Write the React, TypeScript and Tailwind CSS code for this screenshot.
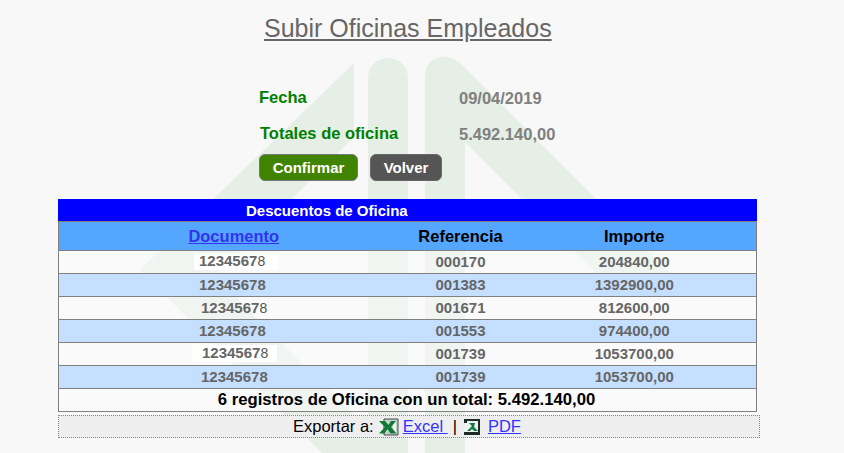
const rows = [
  { ref: "000170", imp: "204840,00", kind: "patch", left: "" },
  { ref: "001383", imp: "1392900,00", kind: "blue", left: "pl-[140px]" },
  { ref: "001671", imp: "812600,00", kind: "plain", left: "pl-[142px]" },
  { ref: "001553", imp: "974400,00", kind: "blue", left: "pl-[140px]" },
  { ref: "001739", imp: "1053700,00", kind: "patch", left: "" },
  { ref: "001739", imp: "1053700,00", kind: "blue", left: "pl-[142px]" },
];

function Watermark() {
  return (
    <svg className="absolute left-0 top-0" width="844" height="453" viewBox="0 0 844 453" fill="#e5efe6">
      <path d="M354 63 L354 137 L215 276 L320 381 L392 453 L322 453 L140 270 Z" />
      <path d="M368 78 a20 20 0 0 1 40 0 L408 453 L368 453 Z" />
      <path d="M425 78 C425 52 452 52 463 66 L694 297 L620 297 L465 142 L465 453 L425 453 Z" />
    </svg>
  );
}

function ExcelIcon() {
  return (
    <svg width="20" height="18" viewBox="0 0 20 18">
      <path d="M5 1 H19 V17 H5 Z" fill="#c6d2cc" stroke="#3c4a44" />
      <path d="M14 3 H17 V15 H14 Z" fill="#eef3ef" />
      <path d="M0 3 H6 L9.5 7 L12 3 H17 L12 9 L17.5 15.5 H11.5 L8.5 11 L5.5 15.5 H0 L6 9 Z" fill="#0f7a35" />
    </svg>
  );
}

function PdfIcon() {
  return (
    <svg width="18" height="18" viewBox="0 0 18 18">
      <rect x="1" y="1" width="16" height="16" fill="#eef3ef" />
      <path d="M1 1 H17 V17 H1 V14 H15 V3 H4 V5 H1 Z" fill="#1c2b26" />
      <path d="M4 13 L9 8 L6 5 H12 L11 9 L15 13 H11 L9 11 L7 13 Z" fill="#0f7a45" />
    </svg>
  );
}

function Doc() {
  return (
    <>
      1234567<span className="text-[14px] font-normal text-[#555555]">8</span>
    </>
  );
}

export default function App() {
  return (
    <div className="relative h-[453px] w-[844px] overflow-hidden bg-[#f8f8f8] font-['Liberation_Sans',Arial,sans-serif]">
      <Watermark />
      <div className="relative flex flex-col">
        <h1 className="ml-[264px] mt-[13px] h-[30px] text-[25px] leading-[30px] text-[#666666] underline">
          Subir Oficinas Empleados
        </h1>

        {/* Resumen */}
        <div className="ml-[259px] mt-[45px] flex flex-col text-[16.5px] font-bold leading-[18px]">
          <div className="flex h-[18px]">
            <span className="w-[200px] text-[#008000]">Fecha</span>
            <span className="mt-[1px] text-[#808080]">09/04/2019</span>
          </div>
          <div className="mt-[18px] flex h-[18px]">
            <span className="ml-[1px] w-[199px] text-[#008000]">Totales de oficina</span>
            <span className="mt-[1px] text-[#808080]">5.492.140,00</span>
          </div>
          <div className="mt-[12px] flex gap-[12px]">
            <button className="h-[27px] w-[99px] rounded-[6px] border border-[#777777] bg-[#3f8300] text-[15px] font-bold text-white">
              Confirmar
            </button>
            <button className="h-[27px] w-[72px] rounded-[6px] border border-[#666666] bg-[#555555] text-[15px] font-bold text-white">
              Volver
            </button>
          </div>
        </div>

        {/* Tabla */}
        <div className="ml-[58px] mt-[18px] w-[699px]">
          <div className="h-[22px] bg-[#0000ff] pl-[188px] text-[15px] font-bold leading-[24px] text-white">
            Descuentos de Oficina
          </div>
          <table className="w-full table-fixed border-collapse text-center text-[15px] font-bold leading-none text-[#666666]">
            <thead>
              <tr className="h-[29px] bg-[#54a6ff] text-[16.5px] text-black">
                <th className="w-[350px] border-y border-l border-[#808080]">
                  <a className="text-[#3333ee] underline">Documento</a>
                </th>
                <th className="w-[104px] border-y border-[#808080]">Referencia</th>
                <th className="border-y border-r border-[#808080]">Importe</th>
              </tr>
            </thead>
            <tbody>
              {rows.map((r, i) => (
                <tr key={i} className={`h-[23px] ${r.kind === "blue" ? "bg-[#c4dfff]" : "bg-[#fbfbfb]/50"}`}>
                  <td className="border-y border-l border-[#808080] pb-[1px] text-left">
                    {r.kind === "patch" ? (
                      <div className={`w-[85px] bg-white pb-[1px] leading-[15px] ${i === 4 ? "ml-[133px] pl-[10px]" : "ml-[135px] pl-[5px]"}`}>
                        <Doc />
                      </div>
                    ) : (
                      <div className={r.left}>{r.kind === "plain" ? <Doc /> : "12345678"}</div>
                    )}
                  </td>
                  <td className="border-y border-[#808080] pb-[1px]">{r.ref}</td>
                  <td className="border-y border-r border-[#808080] pb-[1px]">{r.imp}</td>
                </tr>
              ))}
              <tr className="h-[23px] text-[16.7px] text-black">
                <td colSpan={3} className="border border-[#808080] bg-[#fbfbfb]/50 pr-[2px]">
                  6 registros de Oficina con un total: 5.492.140,00
                </td>
              </tr>
            </tbody>
          </table>

          {/* Exportar */}
          <div className="mt-[3px] flex h-[23px] w-[702px] items-center border border-dotted border-[#888888] bg-[#eeeeee] pl-[234px] text-[16.5px] leading-none text-black">
            <span>Exportar a:</span>
            <span className="ml-[5px]"><ExcelIcon /></span>
            <a className="ml-[4px] text-[#3333ff] underline">Excel&nbsp;</a>
            <span className="ml-[5px]">|</span>
            <span className="ml-[6px]"><PdfIcon /></span>
            <a className="ml-[7px] text-[#3333ff] underline">PDF</a>
          </div>
        </div>
      </div>
    </div>
  );
}
